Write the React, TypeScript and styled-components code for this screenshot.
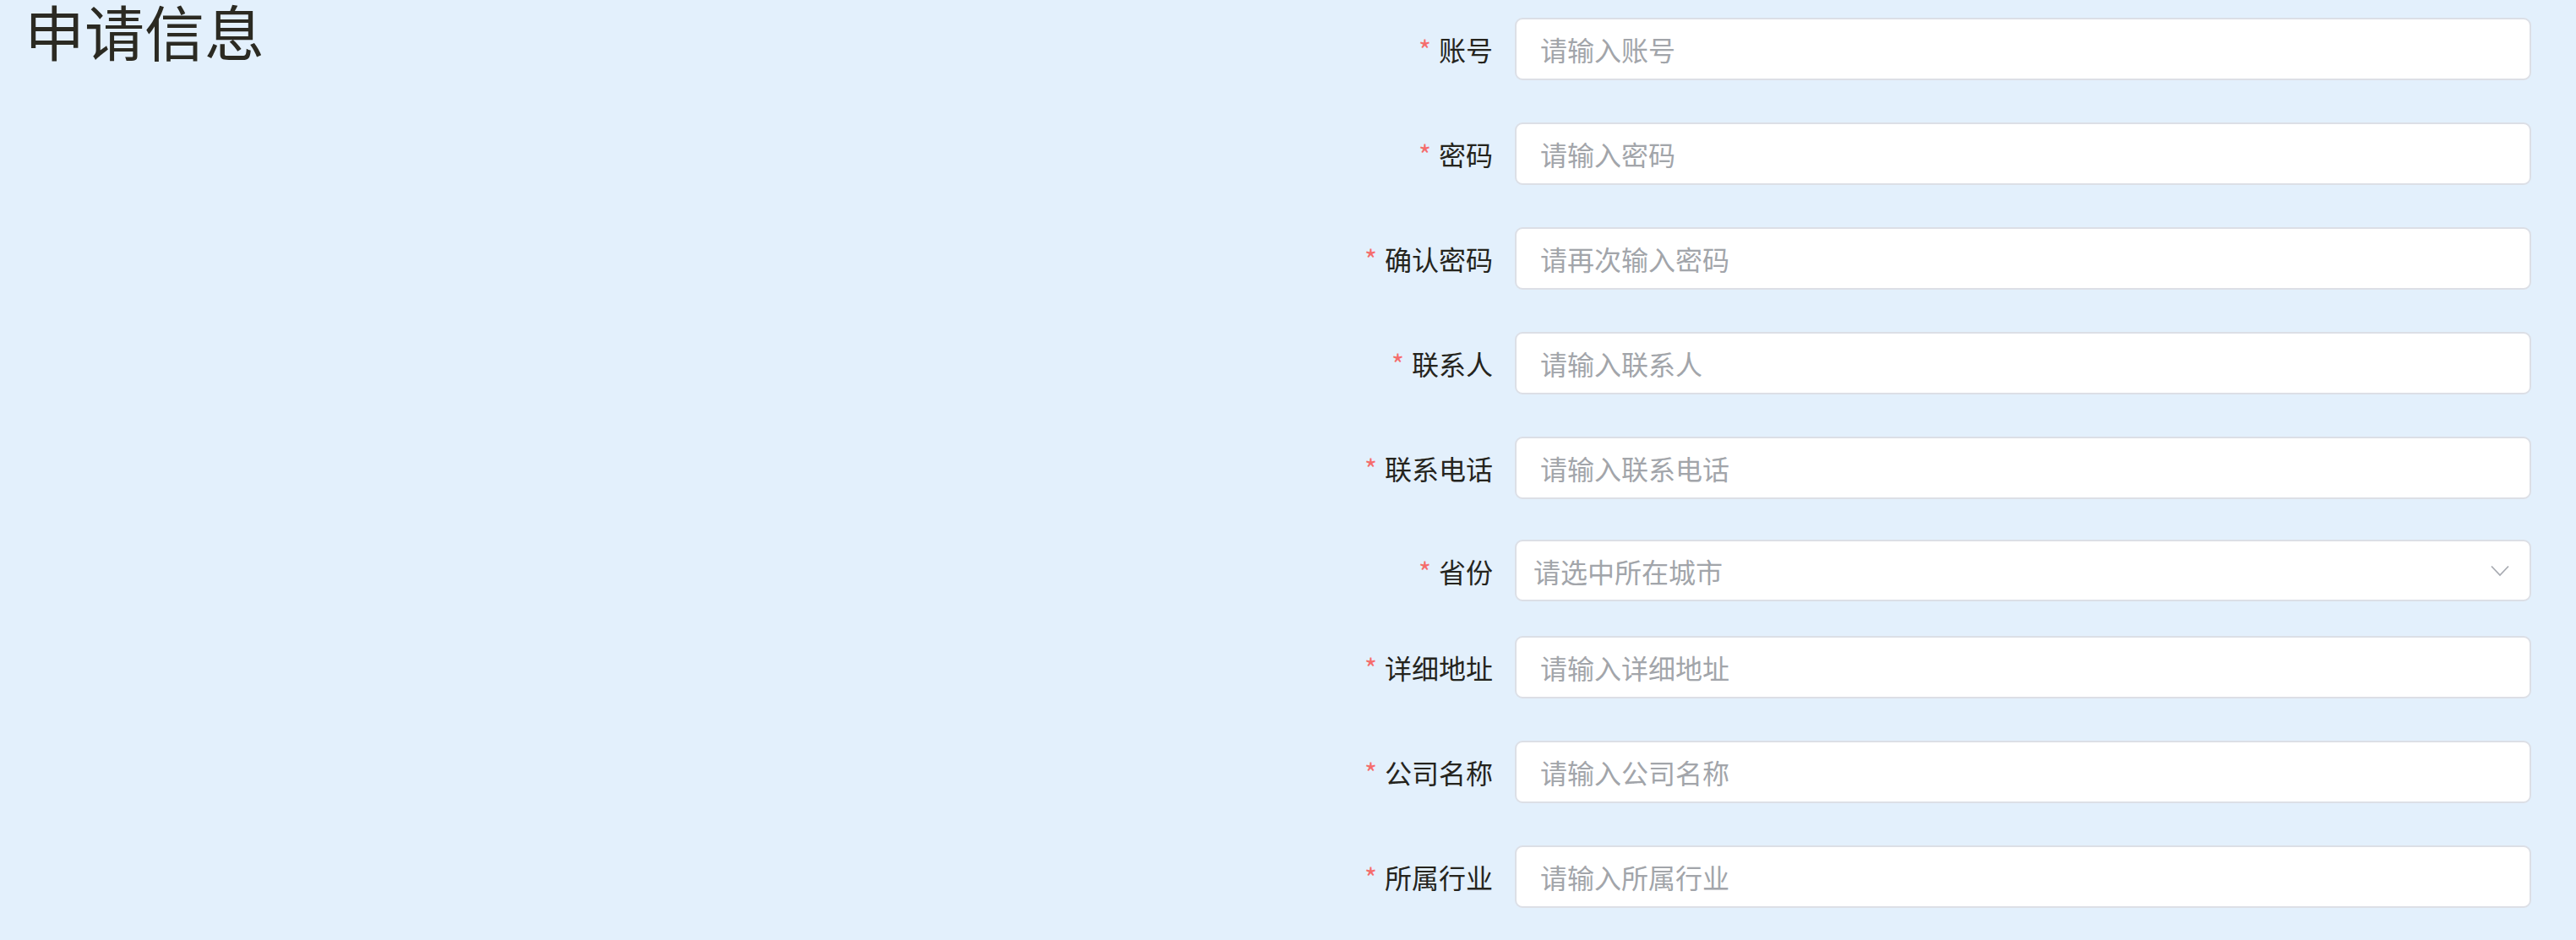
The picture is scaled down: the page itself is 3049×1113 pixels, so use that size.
import React from "react";
import styled, { createGlobalStyle } from "styled-components";

const GlobalStyle = createGlobalStyle`
  html, body {
    margin: 0;
    padding: 0;
    background: #e3f0fc;
  }
  body {
    font-family: "Noto Sans CJK SC", "Noto Sans", sans-serif;
  }
  * { box-sizing: border-box; }
`;

const Page = styled.div`
  display: flex;
  width: 3049px;
  min-height: 1113px;
  background: #e3f0fc;
`;

const Side = styled.div`
  flex: 1;
  padding-left: 29px;
`;

const Title = styled.h1`
  margin: 0;
  font-size: 71px;
  line-height: 1;
  font-weight: 400;
  color: #2b2a22;
  font-family: "Noto Sans CJK SC", sans-serif;
`;

const Form = styled.form`
  width: 1530px;
  padding: 21px 53px 0 0;
  display: flex;
  flex-direction: column;
`;

const Item = styled.div<{ $mb: number }>`
  display: flex;
  align-items: center;
  margin-bottom: ${(p) => p.$mb}px;
`;

const Label = styled.label`
  width: 274px;
  flex: none;
  padding-right: 26px;
  display: flex;
  justify-content: flex-end;
  align-items: center;
  font-size: 32px;
  color: #25241d;
  white-space: nowrap;
`;

const Star = styled.span`
  color: #f56c6c;
  margin-right: 9px;
`;

const Input = styled.input`
  flex: 1;
  height: 74px;
  min-width: 0;
  border: 2px solid #dcdfe6;
  border-radius: 9px;
  background: #fff;
  padding: 0 28px;
  font-size: 32px;
  font-family: "Noto Sans CJK SC", sans-serif;
  color: #303133;
  outline: none;
  &::placeholder {
    color: #a2a5aa;
  }
`;

const Select = styled.div`
  flex: 1;
  height: 73px;
  border: 2px solid #dcdfe6;
  border-radius: 9px;
  background: #fff;
  padding: 0 66px 0 20px;
  display: flex;
  align-items: center;
  justify-content: space-between;
  font-size: 32px;
  color: #a2a5aa;
  position: relative;
`;

const Chevron = styled.svg`
  position: absolute;
  right: 24px;
  top: 50%;
  margin-top: -7px;
`;

const fields: { label: string; placeholder: string; mb: number; select?: boolean }[] = [
  { label: "账号", placeholder: "请输入账号", mb: 50 },
  { label: "密码", placeholder: "请输入密码", mb: 50 },
  { label: "确认密码", placeholder: "请再次输入密码", mb: 50 },
  { label: "联系人", placeholder: "请输入联系人", mb: 50 },
  { label: "联系电话", placeholder: "请输入联系电话", mb: 48 },
  { label: "省份", placeholder: "请选中所在城市", mb: 41, select: true },
  { label: "详细地址", placeholder: "请输入详细地址", mb: 50 },
  { label: "公司名称", placeholder: "请输入公司名称", mb: 50 },
  { label: "所属行业", placeholder: "请输入所属行业", mb: 0 },
];

export default function App() {
  return (
    <>
      <GlobalStyle />
      <Page>
        <Side>
          <Title>申请信息</Title>
        </Side>
        <Form onSubmit={(e) => e.preventDefault()}>
          {fields.map((f) => (
            <Item key={f.label} $mb={f.mb}>
              <Label>
                <Star>*</Star>
                {f.label}
              </Label>
              {f.select ? (
                <Select>
                  <span>{f.placeholder}</span>
                  <Chevron width="22" height="14" viewBox="0 0 22 14" fill="none">
                    <path d="M1 1.5 L11 12 L21 1.5" stroke="#a8abb2" strokeWidth="1.8" />
                  </Chevron>
                </Select>
              ) : (
                <Input placeholder={f.placeholder} />
              )}
            </Item>
          ))}
        </Form>
      </Page>
    </>
  );
}
